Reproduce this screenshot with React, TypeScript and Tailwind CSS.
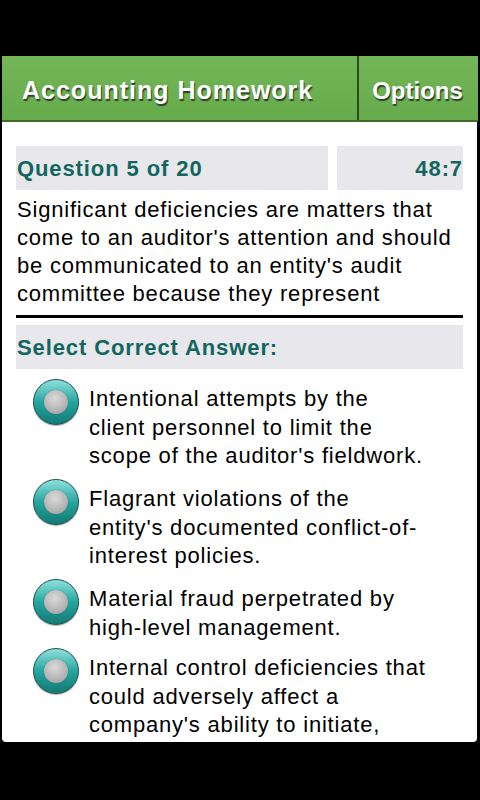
const options = [
  { lines: ["Intentional attempts by the", "client personnel to limit the", "scope of the auditor's fieldwork."], gap: "mb-[8.5px]" },
  { lines: ["Flagrant violations of the", "entity's documented conflict-of-", "interest policies."], gap: "mb-[8.5px]" },
  { lines: ["Material fraud perpetrated by", "high-level management."], gap: "mb-[6px]" },
  { lines: ["Internal control deficiencies that", "could adversely affect a", "company's ability to initiate,"], gap: "" },
];

function Radio() {
  return (
    <div className="w-[46px] h-[46px] shrink-0 rounded-full border border-[#1d4f4c] bg-[linear-gradient(#8fe0dc,#25a6a0_50%,#127a74)] flex items-center justify-center shadow-[0_1px_1px_rgba(0,0,0,0.3)]">
      <div className="w-[24px] h-[24px] rounded-full bg-[radial-gradient(circle_at_45%_35%,#dadada,#9a9a9a)] shadow-[0_0_1px_#555]" />
    </div>
  );
}

export default function App() {
  return (
    <div className="w-[480px] h-[800px] bg-black pt-[56px] overflow-hidden font-['Liberation_Sans',Arial,sans-serif]">
      <div className="flex h-[66px] bg-[linear-gradient(#73b657,#66ab4b)] border-b-2 border-[#3d6b2c] mx-[2px]">
        <div className="w-[357px] flex items-center pt-[5px] pl-[20px] text-white text-[25px] tracking-[1px] font-bold [text-shadow:1px_2px_1px_#2f3f28] border-r-2 border-[#2d4a22]">
          Accounting Homework
        </div>
        <div className="flex-1 flex items-center justify-center pt-[5px] pr-[2px] text-white text-[24px] font-bold [text-shadow:1px_2px_1px_#2f3f28]">
          Options
        </div>
      </div>
      <div className="ml-[2px] w-[475px] h-[620px] bg-white rounded-b-[4px] overflow-hidden px-[14px] pt-[24px]">
        <div className="flex gap-[9px] h-[44px]">
          <div className="w-[313px] bg-[#e7e7ec] flex items-center pl-[1px] text-[#136660] text-[22px] tracking-[0.9px] font-bold">
            Question 5 of 20
          </div>
          <div className="w-[126px] bg-[#e7e7ec] flex items-center justify-end text-[#136660] text-[22px] tracking-[0.9px] font-bold">
            48:7
          </div>
        </div>
        <p className="mt-[6px] pl-[1px] text-[22px] tracking-[0.8px] leading-[28px] text-black whitespace-nowrap">
          Significant deficiencies are matters that
          <br />
          come to an auditor's attention and should
          <br />
          be communicated to an entity's audit
          <br />
          committee because they represent
        </p>
        <div className="mt-[7px] w-[447px] h-[3px] bg-black" />
        <div className="mt-[7px] w-[447px] h-[44px] bg-[#e7e7ec] flex items-center pl-[1px] text-[#136660] text-[22px] tracking-[0.9px] font-bold">
          Select Correct Answer:
        </div>
        <div className="mt-[10px] flex flex-col pl-[17px]">
          {options.map((o) => (
            <div key={o.lines[0]} className={"flex items-start gap-[10px] " + o.gap}>
              <Radio />
              <div className="text-[22px] tracking-[0.8px] leading-[28.5px] text-black mt-[6px] whitespace-nowrap">
                {o.lines.map((l) => (
                  <div key={l}>{l}</div>
                ))}
              </div>
            </div>
          ))}
        </div>
      </div>
    </div>
  );
}
